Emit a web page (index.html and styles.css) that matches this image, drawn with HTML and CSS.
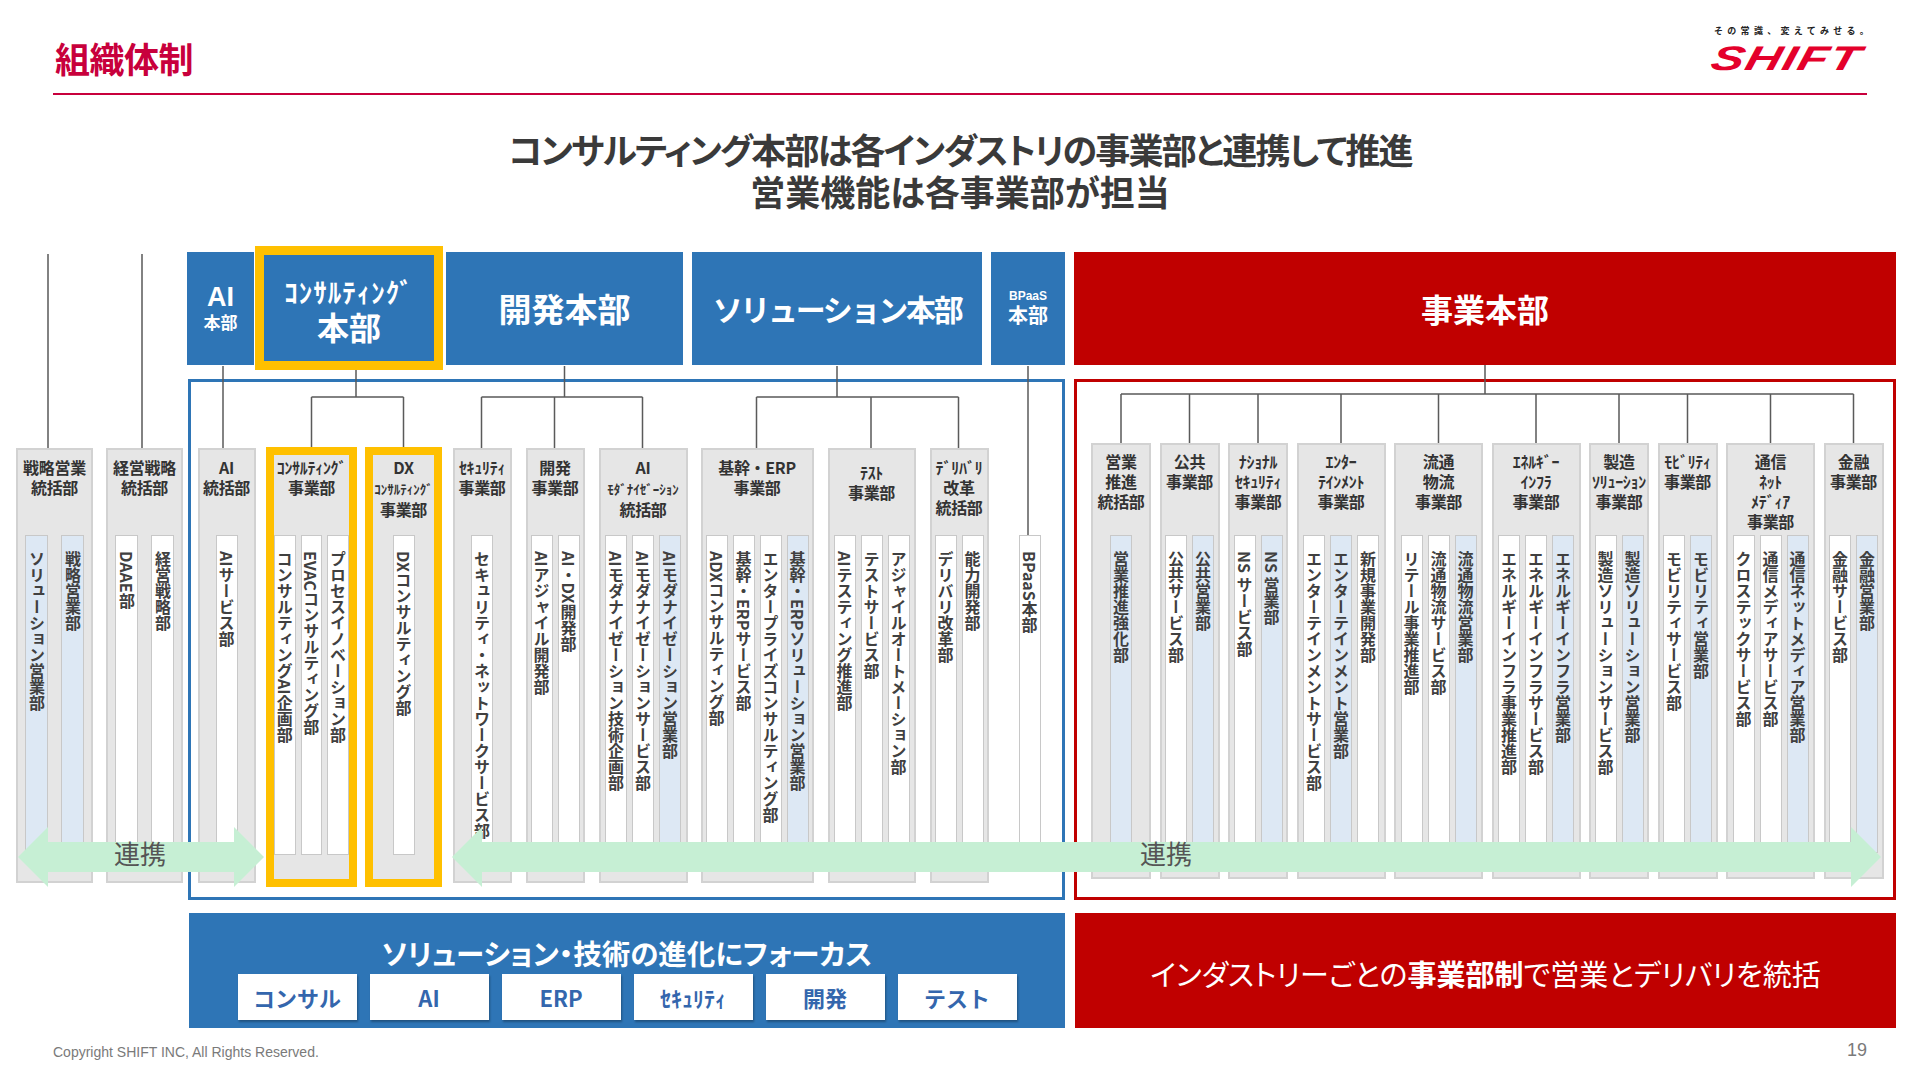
FILE: index.html
```html
<!DOCTYPE html>
<html lang="ja">
<head>
<meta charset="utf-8">
<title>組織体制</title>
<link rel="stylesheet" href="styles.css">
</head>
<body>
<div class="page">
  <header class="top">
    <h1 class="title">組織体制</h1>
    <div class="logo">
      <div class="tagline">その常識、変えてみせる。</div>
      <div class="shift">SHIFT</div>
    </div>
  </header>

  <div class="headline"><span class="hl-1">コンサルティング本部は各インダストリの事業部と連携して推進</span><br><span class="hl-2">営業機能は各事業部が担当</span></div>

  <div class="chart">
    <section class="sec-left">
      <div class="col w77">
        <div class="col-head">戦略営業<br>統括部</div>
        <div class="strips wide"><div class="strip blue">ソリューション営業部</div><div class="strip blue">戦略営業部</div></div>
      </div>
      <div class="col w77">
        <div class="col-head">経営戦略<br>統括部</div>
        <div class="strips wide"><div class="strip">DAAE部</div><div class="strip">経営戦略部</div></div>
      </div>
    </section>

    <section class="sec-blue">
      <div class="heads">
        <div class="hq hq-ai"><span class="ai-big">AI</span><span class="ai-small">本部</span></div>
        <div class="hq hq-consul"><span class="consul-kana">ｺﾝｻﾙﾃｨﾝｸﾞ</span><span class="consul-big">本部</span></div>
        <div class="hq hq-dev">開発本部</div>
        <div class="hq hq-sol">ソリューション本部</div>
        <div class="hq hq-bpaas"><span class="bp-small">BPaaS</span><span class="bp-big">本部</span></div>
      </div>
      <div class="frame frame-blue">
        <div class="col w58">
          <div class="col-head">AI<br>統括部</div>
          <div class="strips"><div class="strip">AIサービス部</div></div>
        </div>
        <div class="col yellow w91 m10">
          <div class="col-head">ｺﾝｻﾙﾃｨﾝｸﾞ<br>事業部</div>
          <div class="strips"><div class="strip">コンサルティングAI企画部</div><div class="strip">EVACコンサルティング部</div><div class="strip">プロセスイノベーション部</div></div>
        </div>
        <div class="col yellow w77 m8">
          <div class="col-head">DX<br><span class="sm">ｺﾝｻﾙﾃｨﾝｸﾞ</span><br>事業部</div>
          <div class="strips"><div class="strip">DXコンサルティング部</div></div>
        </div>
        <div class="col w59 m10">
          <div class="col-head">ｾｷｭﾘﾃｨ<br>事業部</div>
          <div class="strips"><div class="strip">セキュリティ・ネットワークサービス部</div></div>
        </div>
        <div class="col w59">
          <div class="col-head">開発<br>事業部</div>
          <div class="strips"><div class="strip">AIアジャイル開発部</div><div class="strip">AI・DX開発部</div></div>
        </div>
        <div class="col w89">
          <div class="col-head">AI<br><span class="sm">ﾓﾀﾞﾅｲｾﾞｰｼｮﾝ</span><br>統括部</div>
          <div class="strips"><div class="strip">AIモダナイゼーション技術企画部</div><div class="strip">AIモダナイゼーションサービス部</div><div class="strip blue">AIモダナイゼーション営業部</div></div>
        </div>
        <div class="col w113 m13">
          <div class="col-head">基幹・ERP<br>事業部</div>
          <div class="strips"><div class="strip">ADXコンサルティング部</div><div class="strip">基幹・ERPサービス部</div><div class="strip">エンタープライズコンサルティング部</div><div class="strip blue">基幹・ERPソリューション営業部</div></div>
        </div>
        <div class="col w88">
          <div class="col-head pad-test">ﾃｽﾄ<br>事業部</div>
          <div class="strips"><div class="strip">AIテスティング推進部</div><div class="strip">テストサービス部</div><div class="strip">アジャイルオートメーション部</div></div>
        </div>
        <div class="col w59">
          <div class="col-head">ﾃﾞﾘﾊﾞﾘ<br>改革<br>統括部</div>
          <div class="strips"><div class="strip">デリバリ改革部</div><div class="strip">能力開発部</div></div>
        </div>
        <div class="col bare w60 m11">
          <div class="col-head"></div>
          <div class="strips"><div class="strip">BPaaS本部</div></div>
        </div>
      </div>
      <div class="banner banner-blue">
        <div class="banner-title">ソリューション・技術の進化にフォーカス</div>
        <div class="chips">
          <span class="chip">コンサル</span>
          <span class="chip">AI</span>
          <span class="chip">ERP</span>
          <span class="chip">ｾｷｭﾘﾃｨ</span>
          <span class="chip">開発</span>
          <span class="chip">テスト</span>
        </div>
      </div>
    </section>

    <section class="sec-red">
      <div class="heads">
        <div class="hq hq-biz">事業本部</div>
      </div>
      <div class="frame frame-red">
        <div class="col w60">
          <div class="col-head">営業<br>推進<br>統括部</div>
          <div class="strips"><div class="strip blue">営業推進強化部</div></div>
        </div>
        <div class="col w60">
          <div class="col-head">公共<br>事業部</div>
          <div class="strips"><div class="strip">公共サービス部</div><div class="strip blue">公共営業部</div></div>
        </div>
        <div class="col w60">
          <div class="col-head">ﾅｼｮﾅﾙ<br>ｾｷｭﾘﾃｨ<br>事業部</div>
          <div class="strips"><div class="strip">NS サービス部</div><div class="strip blue">NS 営業部</div></div>
        </div>
        <div class="col w89">
          <div class="col-head">ｴﾝﾀｰ<br>ﾃｲﾝﾒﾝﾄ<br>事業部</div>
          <div class="strips"><div class="strip">エンターテインメントサービス部</div><div class="strip blue">エンターテインメント営業部</div><div class="strip">新規事業開発部</div></div>
        </div>
        <div class="col w89">
          <div class="col-head">流通<br>物流<br>事業部</div>
          <div class="strips"><div class="strip">リテール事業推進部</div><div class="strip">流通物流サービス部</div><div class="strip blue">流通物流営業部</div></div>
        </div>
        <div class="col w89">
          <div class="col-head">ｴﾈﾙｷﾞｰ<br>ｲﾝﾌﾗ<br>事業部</div>
          <div class="strips"><div class="strip">エネルギーインフラ事業推進部</div><div class="strip">エネルギーインフラサービス部</div><div class="strip blue">エネルギーインフラ営業部</div></div>
        </div>
        <div class="col w60">
          <div class="col-head">製造<br>ｿﾘｭｰｼｮﾝ<br>事業部</div>
          <div class="strips"><div class="strip">製造ソリューションサービス部</div><div class="strip blue">製造ソリューション営業部</div></div>
        </div>
        <div class="col w60">
          <div class="col-head">ﾓﾋﾞﾘﾃｨ<br>事業部</div>
          <div class="strips"><div class="strip">モビリティサービス部</div><div class="strip blue">モビリティ営業部</div></div>
        </div>
        <div class="col w89">
          <div class="col-head">通信<br>ﾈｯﾄ<br>ﾒﾃﾞｨｱ<br>事業部</div>
          <div class="strips"><div class="strip">クロステックサービス部</div><div class="strip">通信メディアサービス部</div><div class="strip blue">通信ネットメディア営業部</div></div>
        </div>
        <div class="col w60">
          <div class="col-head">金融<br>事業部</div>
          <div class="strips"><div class="strip">金融サービス部</div><div class="strip blue">金融営業部</div></div>
        </div>
      </div>
      <div class="banner banner-red">インダストリーごとの<b>事業部制</b>で営業とデリバリを統括</div>
    </section>
  </div>

  <footer class="foot">
    <span class="copy">Copyright SHIFT INC, All Rights Reserved.</span>
    <span class="pageno">19</span>
  </footer>

  <svg class="overlay" width="1920" height="1080" viewBox="0 0 1920 1080">
    <g class="lines">
      <path d="M48 254V448 M142 254V448"/>
      <path d="M223 366V448"/>
      <path d="M356 370V397 M311.5 397H403.5 M311.5 397V447 M403.5 397V447"/>
      <path d="M564.5 366V397 M481.5 397H642.5 M481.5 397V448 M554.5 397V448 M642.5 397V448"/>
      <path d="M837 366V397 M756.5 397H958.5 M756.5 397V448 M871 397V448 M958.5 397V448"/>
      <path d="M1028 366V535"/>
      <path d="M1485 365V394 M1121 394H1853.5 M1121 394V443 M1189.5 394V443 M1258 394V443 M1341 394V443 M1438.5 394V443 M1536 394V443 M1619 394V443 M1687.5 394V443 M1770.5 394V443 M1853.5 394V443"/>
    </g>
    <g class="arrows">
      <polygon points="18,857 48,827 48,842 234,842 234,827 264,857 234,887 234,872 48,872 48,887"/>
      <polygon points="452,857 482,827 482,842 1851,842 1851,827 1881,857 1851,887 1851,872 482,872 482,887"/>
    </g>
  </svg>
  <span class="renkei renkei-l">連携</span>
  <span class="renkei renkei-r">連携</span>
</div>
</body>
</html>
```

FILE: styles.css
```css
* { box-sizing: border-box; }

body {
  margin: 0;
  background: #fff;
  font-family: "Noto Sans CJK JP", "Noto Sans", sans-serif;
  color: #333;
}

.page {
  position: relative;
  width: 1920px;
  height: 1080px;
  overflow: hidden;
}

/* ---------- header ---------- */
.top {
  height: 95px;
  margin: 0 53px;
  border-bottom: 2px solid #c8003c;
  display: flex;
  justify-content: space-between;
}

.title {
  margin: 0;
  padding: 37px 0 0 2px;
  font-size: 35px;
  line-height: 42px;
  font-weight: 700;
  color: #c8003c;
  letter-spacing: -0.5px;
}

.logo {
  width: 155px;
  padding-top: 25px;
}

.tagline {
  font-size: 9px;
  line-height: 12px;
  letter-spacing: 4.3px;
  font-weight: 700;
  color: #222;
  white-space: nowrap;
  padding-left: 2px;
}

.shift {
  margin-top: 5px;
  font-family: "Liberation Sans", Arial, sans-serif;
  font-weight: 700;
  font-style: italic;
  font-size: 34px;
  line-height: 32px;
  letter-spacing: 1px;
  color: #e4002b;
  transform: scaleX(1.45) skewX(-10deg);
  transform-origin: left center;
  white-space: nowrap;
}

.headline {
  margin-top: 33px;
  text-align: center;
  font-size: 35px;
  line-height: 42px;
  font-weight: 700;
  color: #3a3a3a;
  font-feature-settings: "palt";
}

.hl-1 { letter-spacing: -1.8px; }

/* ---------- chart ---------- */
.chart {
  display: flex;
  margin-top: 34px;
}

.sec-left {
  width: 187px;
  padding: 202px 0 0 16px;
  display: flex;
  align-items: flex-start;
  gap: 13px;
}

.sec-blue { width: 878px; }
.sec-red { width: 822px; margin-left: 9px; }

.heads {
  height: 124px;
  display: flex;
  align-items: center;
}

.hq {
  height: 113px;
  background: #2e75b6;
  color: #fff;
  font-weight: 700;
  display: flex;
  flex-direction: column;
  align-items: center;
  justify-content: center;
  white-space: nowrap;
}

.hq-ai { width: 67px; }
.ai-big { font-family: "Liberation Sans", Arial, sans-serif; font-size: 27px; line-height: 28px; }
.ai-small { font-size: 17px; line-height: 22px; }

.hq-consul {
  width: 188px;
  height: 124px;
  margin-left: 1px;
  border: 9px solid #ffc000;
  padding-top: 6px;
}
.consul-kana { font-size: 27px; line-height: 30px; letter-spacing: 1px; }
.consul-big { font-size: 32px; line-height: 38px; }

.hq-dev { width: 237px; margin-left: 3px; font-size: 33px; }
.hq-sol { width: 290px; margin-left: 9px; font-size: 30px; letter-spacing: -2.3px; }
.hq-bpaas { width: 74px; margin-left: 9px; }
.bp-small { font-family: "Liberation Sans", Arial, sans-serif; font-size: 12px; line-height: 14px; }
.bp-big { font-size: 20px; line-height: 24px; }

.hq-biz { width: 822px; background: #c00000; font-size: 32px; }

/* frames */
.frame {
  height: 521px;
  margin-top: 9px;
  display: flex;
  align-items: flex-start;
}

.frame-blue {
  margin-left: 1px;
  width: 877px;
  border: 3px solid #2e75b6;
  padding: 66px 0 0 6.5px;
}

.frame-red {
  width: 822px;
  border: 3px solid #c00000;
  padding: 61px 0 0 14px;
  gap: 8.5px;
}

/* columns */
.col {
  flex: none;
  height: 435px;
  background: #e6e6e6;
  border: 2px solid #d2d2d2;
  display: flex;
  flex-direction: column;
}

.frame-red .col { height: 436px; }

.col-head {
  height: 85px;
  padding-top: 7px;
  text-align: center;
  font-size: 16px;
  line-height: 20px;
  font-weight: 700;
  color: #333;
  white-space: nowrap;
  letter-spacing: -0.3px;
}

.frame-red .col-head { height: 90px; padding-top: 6px; }
.col-head.pad-test { padding-top: 12px; }

.sm { font-size: 13px; letter-spacing: 0; }

.col.yellow {
  height: 440px;
  margin-top: -1px;
  border: 8px solid #ffc000;
}
.col.yellow .col-head { height: 80px; padding-top: 2px; }

.col.bare {
  background: none;
  border: none;
}
.col.bare .col-head { height: 87px; }

.w58 { width: 58px; }
.w59 { width: 59px; }
.w60 { width: 60px; }
.w77 { width: 77px; }
.w88 { width: 88px; }
.w89 { width: 89px; }
.w91 { width: 91px; }
.w113 { width: 113px; }

.frame-blue .col + .col { margin-left: 14px; }
.frame-blue .col.m8 { margin-left: 8px; }
.frame-blue .col.m10 { margin-left: 10.5px; }
.frame-blue .col.m11 { margin-left: 11px; }
.frame-blue .col.m13 { margin-left: 13px; }

.strips {
  flex: 1;
  min-height: 0;
  display: flex;
  justify-content: center;
  gap: 5px;
  padding-bottom: 24px;
}

.strips.wide { gap: 13px; }

.strip {
  width: 22px;
  background: #fff;
  border: 1px solid #c8c8c8;
  writing-mode: vertical-rl;
  padding-top: 15px;
  font-size: 16px;
  line-height: 20px;
  font-weight: 700;
  color: #404040;
  overflow: hidden;
  white-space: nowrap;
}

.strips.wide .strip { width: 23px; }

.strip.blue { background: #dde8f4; }

/* banners */
.banner {
  height: 115px;
  margin-top: 13px;
}

.banner-blue {
  margin-left: 2px;
  background: #2e75b6;
  display: flex;
  flex-direction: column;
  align-items: center;
  padding-top: 23px;
}

.banner-title {
  color: #fff;
  font-size: 28.5px;
  line-height: 34px;
  font-weight: 700;
  font-feature-settings: "palt";
  white-space: nowrap;
}

.chips {
  display: flex;
  gap: 13px;
  margin-top: 4px;
}

.chip {
  width: 119px;
  height: 46px;
  background: #fff;
  color: #3466ad;
  font-size: 22px;
  font-weight: 700;
  display: flex;
  align-items: center;
  justify-content: center;
  box-shadow: 1px 2px 2px rgba(0, 0, 0, 0.3);
}

.banner-red {
  margin-left: 1px;
  background: #c00000;
  color: #fff;
  display: flex;
  align-items: center;
  justify-content: center;
  font-size: 29px;
  font-weight: 400;
  font-feature-settings: "palt";
  padding-top: 4px;
  white-space: nowrap;
}
.banner-red b { font-weight: 700; }

/* footer */
.foot {
  margin: 12px 53px 0;
  display: flex;
  justify-content: space-between;
  align-items: flex-end;
}

.copy {
  font-family: "Liberation Sans", Arial, sans-serif;
  font-size: 14px;
  line-height: 16px;
  color: #7a7a7a;
}

.pageno {
  font-family: "Liberation Sans", Arial, sans-serif;
  font-size: 18px;
  line-height: 20px;
  color: #7a7a7a;
}

/* overlay: connectors + arrows */
.overlay {
  position: absolute;
  left: 0;
  top: 0;
  pointer-events: none;
}

.lines path {
  fill: none;
  stroke: #5a5a5a;
  stroke-width: 1.5;
}

.arrows polygon { fill: #c6efd4; }

.renkei {
  position: absolute;
  top: 837px;
  font-size: 26px;
  line-height: 32px;
  color: #555;
  font-weight: 400;
}
.renkei-l { left: 114px; }
.renkei-r { left: 1140px; }
```
